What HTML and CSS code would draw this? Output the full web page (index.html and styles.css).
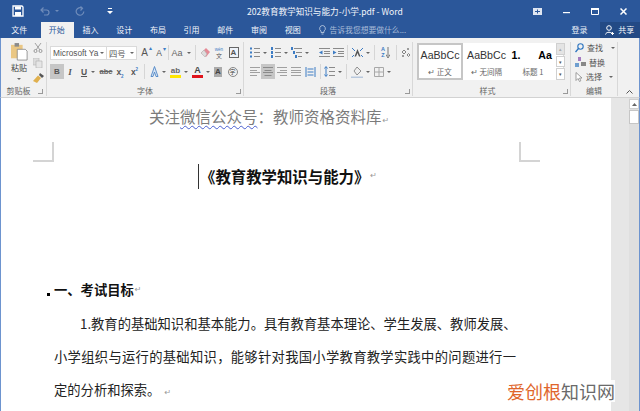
FILE: index.html
```html
<!DOCTYPE html>
<html lang="zh">
<head>
<meta charset="utf-8">
<title>Word</title>
<link rel="stylesheet" href="styles.css">
</head>
<body>
<div class="app">
  <header class="titlebar">
    <div class="qat">
      <svg class="ic q-save" width="12" height="12" viewBox="0 0 12 12"><path d="M1 1h9l1 1v9H1z" fill="none" stroke="#fff" stroke-width="1.3"/><path d="M3 1.500h6v3H3zM3 7h6v4H3z" fill="#fff"/></svg>
      <svg class="ic q-undo" width="10" height="10" viewBox="0 0 10 10"><path d="M1 4h5.500a2.500 2.500 0 0 1 0 5H4M3.500 1.500 1 4l2.500 2.500" fill="none" stroke="#6f8cba" stroke-width="1.200"/></svg>
      <span class="q-caret"></span>
      <svg class="ic q-redo" width="10" height="10" viewBox="0 0 10 10"><path d="M7 2.200A3.800 3.800 0 1 0 8.800 5.500M5.500 .5 7.500 2.300 5.500 4.500" fill="none" stroke="#6f8cba" stroke-width="1.200"/></svg>
      <svg class="ic q-more" width="6" height="6" viewBox="0 0 6 6"><path d="M1 0h4v1H1zM0 3h6L3 6z" fill="#fff"/></svg>
    </div>
    <div class="doc-title">202教育教学知识与能力-小学.pdf - Word</div>
    <div class="winbtns">
      <svg width="9" height="7" viewBox="0 0 9 7"><path d="M0 0h9v7H0z" fill="#dfe6f1"/><path d="M2 3.500h5M4.500 1.500v4" stroke="#2b579a" stroke-width="1"/></svg>
      <svg width="7" height="7" viewBox="0 0 7 7"><path d="M0 4h7v1.200H0z" fill="#fff"/></svg>
      <svg width="8" height="7" viewBox="0 0 8 7"><path d="M.5 .5h7v6h-7z" fill="none" stroke="#fff"/><path d="M0 0h8v2H0z" fill="#fff"/></svg>
      <svg width="7" height="7" viewBox="0 0 7 7"><path d="M.5 .5l6 6M6.500 .5l-6 6" stroke="#fff" stroke-width="1.500"/></svg>
    </div>
  </header>

  <nav class="tabs">
    <span class="tab">文件</span>
    <span class="tab tab-on">开始</span>
    <span class="tab">插入</span>
    <span class="tab">设计</span>
    <span class="tab">布局</span>
    <span class="tab">引用</span>
    <span class="tab">邮件</span>
    <span class="tab">审阅</span>
    <span class="tab">视图</span>
    <span class="tell">
      <svg width="7" height="10" viewBox="0 0 7 10"><path d="M3.500 .5a3 3 0 0 1 1.500 5.500V7.500H2V6A3 3 0 0 1 3.500 .5zM2.500 9h2" fill="none" stroke="#c6d3e6" stroke-width=".8"/></svg>
      告诉我您想要做什么...
    </span>
    <span class="login">登录</span>
    <span class="share">
      <svg width="10" height="10" viewBox="0 0 10 10"><circle cx="4" cy="3" r="2.300" fill="none" stroke="#fff"/><path d="M.5 9.500C1 6.500 7 6.500 7.500 9.500M7.500 7v3M6 8.500h3" fill="none" stroke="#fff"/></svg>
      共享
    </span>
  </nav>

  <section class="ribbon">
    <div class="group g-clip">
      <div class="clip-body">
        <div class="paste">
          <svg width="17" height="18" viewBox="0 0 19 20"><path d="M0 2h13v15H0z" fill="#eac784"/><path d="M4 0h5v4H4z" fill="#8a8a8a"/><path d="M7 7h9l2 2v10H7z" fill="#fff" stroke="#777" stroke-width=".8"/></svg>
          <span class="paste-t">粘贴</span>
          <span class="caret"></span>
        </div>
        <div class="clip-small">
          <svg width="10" height="10" viewBox="0 0 10 10"><path d="M2 0l5 7M8 0L3 7" stroke="#9a9a9a" stroke-width=".9"/><circle cx="2.500" cy="8" r="1.500" fill="none" stroke="#9a9a9a"/><circle cx="7.500" cy="8" r="1.500" fill="none" stroke="#9a9a9a"/></svg>
          <svg width="10" height="10" viewBox="0 0 10 10"><path d="M0 0h6v7H0z" fill="#dcdcdc" stroke="#bbb" stroke-width=".7"/><path d="M3 3h6v7H3z" fill="#e6e6e6" stroke="#b5b5b5" stroke-width=".7"/></svg>
          <svg width="11" height="10" viewBox="0 0 11 10"><path d="M7 0l4 3-2 2-3-3z" fill="#555"/><path d="M5 2.500 8 5 4 10 0 8z" fill="#e0b04e"/></svg>
        </div>
      </div>
      <div class="g-label">剪贴板<i class="launch"></i></div>
    </div>

    <div class="group g-font">
      <div class="row font-r1">
        <span class="combo">Microsoft Ya<span class="caret"></span></span>
        <span class="combo combo-2">四号<span class="caret"></span></span>
        <span class="t-a">A<sup>▴</sup></span>
        <span class="t-a t-a2">A<sup>▾</sup></span>
        <i class="vsep"></i>
        <span class="t-aa">Aa<span class="caret"></span></span>
        <i class="vsep"></i>
        <svg width="11" height="11" viewBox="0 0 11 11"><path d="M6 1l4 4-4 5-5-4z" fill="#e58a96"/><path d="M1 6l3-3 3 4-2 3z" fill="#ddd" stroke="#aaa" stroke-width=".5"/></svg>
        <span class="wen"><b>wén</b><em>文</em></span>
        <span class="boxa">A</span>
      </div>
      <div class="row font-r2">
        <span class="t-b on">B</span>
        <span class="t-i">I</span>
        <span class="t-u"><u>U</u><span class="caret"></span></span>
        <span class="t-abc">abc</span>
        <span class="t-x">x<sub>2</sub></span>
        <span class="t-x">x<sup>2</sup></span>
        <i class="vsep"></i>
        <span class="t-eff"><svg width="9" height="11" viewBox="0 0 9 11"><path d="M4.500 .5 8 10.500H6L4.500 6 3 10.500H1z" fill="#d9e6f5" stroke="#4f86c6" stroke-width=".9"/></svg><span class="caret"></span></span>
        <span class="t-col"><span class="glyph-wrap"><span class="ab">ab</span><i class="bar bar-y"></i></span><span class="caret"></span></span>
        <span class="t-col"><span class="glyph-wrap"><span class="ab ab-a">A</span><i class="bar bar-r"></i></span><span class="caret"></span></span>
        <span class="graya">A</span>
        <span class="circ">字</span>
      </div>
      <div class="g-label">字体<i class="launch"></i></div>
    </div>

    <div class="group g-para">
      <div class="row para-r1">
        <span class="lst"><svg width="10" height="11" viewBox="0 0 10 11"><path d="M4 1.500h6M4 5.500h6M4 9.500h6" stroke="#8a8a8a"/><path d="M0 .5h2v2H0zM0 4.500h2v2H0zM0 8.500h2v2H0z" fill="#3d7cc4"/></svg><span class="caret"></span></span>
        <span class="lst"><svg width="10" height="11" viewBox="0 0 10 11"><path d="M4 1.500h6M4 5.500h6M4 9.500h6" stroke="#8a8a8a"/><path d="M0 0h2v3H0zM0 4h2v3H0zM0 8h2v3H0z" fill="#3d7cc4"/></svg><span class="caret"></span></span>
        <span class="lst"><svg width="11" height="11" viewBox="0 0 11 11"><path d="M3 1.500h8M5 5.500h6M7 9.500h4" stroke="#8a8a8a"/><path d="M0 0h2v3H0zM2 4h2v3H2zM4 8h2v3H4z" fill="#3d7cc4"/></svg><span class="caret"></span></span>
        <span></span>
        <svg width="11" height="9" viewBox="0 0 11 9"><path d="M0 .5h11M5 3.500h6M5 5.500h6M0 8.500h11" stroke="#8a8a8a"/><path d="M3.500 2.500v4L0 4.500z" fill="#3d7cc4"/></svg>
        <svg width="11" height="9" viewBox="0 0 11 9"><path d="M0 .5h11M5 3.500h6M5 5.500h6M0 8.500h11" stroke="#8a8a8a"/><path d="M0 2.500v4l3.500-2z" fill="#3d7cc4"/></svg>
        <i class="vsep"></i>
        <span class="lst"><svg width="11" height="9" viewBox="0 0 11 9"><path d="M5.500 1 8.500 8.500h-1.500L5.500 5 4 8.500H2.500z" fill="#555"/><path d="M0 0l3 3M11 0 8 3M0 9l2-2M11 9 9 7" stroke="#3d7cc4"/></svg><span class="caret"></span></span>
        <i class="vsep"></i>
        <span class="az"><span class="az-t">A<br>Z</span><svg width="4" height="11" viewBox="0 0 4 11"><path d="M2 0v9M0 7.500 2 11l2-3.500" fill="none" stroke="#777"/></svg></span>
        <i class="vsep"></i>
        <svg width="9" height="10" viewBox="0 0 9 10"><path d="M1 4l2-2 2 2-2 2zM6 7l1.500-1.500L9 7 7.500 8.500zM6 1l2 0M7 0v2M1 8h2M2 7v2" fill="none" stroke="#777" stroke-width=".9"/></svg>
      </div>
      <div class="row para-r2">
        <svg width="10" height="9" viewBox="0 0 10 9"><path d="M0 .5h10M0 3.500h7M0 5.500h10M0 8.500h7" stroke="#a0a0a0"/></svg>
        <span class="al on"><svg width="10" height="9" viewBox="0 0 10 9"><path d="M0 .5h10M1.500 3.500h7M0 5.500h10M1.500 8.500h7" stroke="#8a8a8a"/></svg></span>
        <svg width="10" height="9" viewBox="0 0 10 9"><path d="M0 .5h10M3 3.500h7M0 5.500h10M3 8.500h7" stroke="#a0a0a0"/></svg>
        <svg width="10" height="9" viewBox="0 0 10 9"><path d="M0 .5h10M0 3.500h10M0 5.500h10M0 8.500h10" stroke="#a0a0a0"/></svg>
        <svg width="11" height="10" viewBox="0 0 11 10"><path d="M1 0v10M10 0v10M2.500 2h6M2.500 5h6M2.500 8h6" stroke="#3d7cc4"/></svg>
        <i class="vsep"></i>
        <span class="lst"><svg width="11" height="11" viewBox="0 0 11 11"><path d="M5 1.500h6M5 5.500h6M5 9.500h6" stroke="#8a8a8a"/><path d="M2 1v9M.5 2.500 2 .5l1.500 2M.5 8.500 2 10.500l1.500-2" fill="none" stroke="#3d7cc4"/></svg><span class="caret"></span></span>
        <i class="vsep"></i>
        <span class="lst"><svg width="12" height="12" viewBox="0 0 12 12"><path d="M3 5l3-4 4 4-4 4z" fill="#eee" stroke="#777" stroke-width=".8"/><path d="M0 10.500h12v1.500H0z" fill="#b9c8dc"/></svg><span class="caret"></span></span>
        <span class="lst"><svg width="10" height="10" viewBox="0 0 10 10"><path d="M.5 .5h9v9h-9zM5 .5v9M.5 5h9" fill="none" stroke="#a8a8a8"/></svg><span class="caret"></span></span>
      </div>
      <div class="g-label">段落<i class="launch"></i></div>
    </div>

    <div class="group g-style">
      <div class="gallery">
        <div class="st st-on"><span class="st-s">AaBbCc</span><span class="st-n">↵ 正文</span></div>
        <div class="st"><span class="st-s">AaBbCc</span><span class="st-n">↵ 无间隔</span></div>
        <div class="st st-3"><span class="st-s st-h"><b>1.</b><b>Aa</b></span><span class="st-n">标题 1</span></div>
        <div class="gal-btns">
          <span class="gb gb-off">▴</span>
          <span class="gb">▾</span>
          <span class="gb">▾</span>
        </div>
      </div>
      <div class="g-label g-label-style">样式<i class="launch"></i></div>
    </div>

    <div class="group g-edit">
      <div class="edit-list">
        <span class="ed"><svg width="9" height="10" viewBox="0 0 9 10"><circle cx="5.500" cy="3.500" r="2.700" fill="none" stroke="#2e75c0" stroke-width="1.100"/><path d="M3.500 5.500 .5 9" stroke="#2e75c0" stroke-width="1.300"/></svg>查找<span class="caret ed-c"></span></span>
        <span class="ed"><svg width="11" height="10" viewBox="0 0 11 10"><path d="M3 0h3v4H3z" fill="#a57bc0"/><path d="M0 6h4v4H0z" fill="#6f9fd0"/><path d="M6 5h5v4H6z" fill="#888"/></svg>替换</span>
        <span class="ed"><svg width="8" height="10" viewBox="0 0 8 10"><path d="M1 .5v8l2-2 1.500 3 1.300-.7L4.500 6H7z" fill="#fff" stroke="#888" stroke-width=".8"/></svg>选择<span class="caret"></span></span>
      </div>
      <div class="g-label">编辑</div>
    </div>
    <div class="collapse"><svg width="7" height="4" viewBox="0 0 7 4"><path d="M.5 3.500l3-3 3 3" fill="none" stroke="#555"/></svg></div>
  </section>

  <main class="workspace">
    <article class="page">
      <p class="h-notice">关注<span class="wavy">微信公众号</span>&#xFF1A;教师资格资料库<span class="ret">↵</span></p>
      <div class="crops"><i class="crop crop-l"></i><i class="crop crop-r"></i></div>
      <h1 class="doc-h"><span class="cursor"></span>《教育教学知识与能力》<span class="ret">↵</span></h1>
      <h2 class="sec"><i class="sec-dot"></i>一、考试目标<span class="ret">↵</span></h2>
      <p class="body">
        <span class="indent">1.教育的基础知识和基本能力。具有教育基本理论、学生发展、教师发展、</span><br>
        <span class="just">小学组织与运行的基础知识&#xFF0C;能够针对我国小学教育教学实践中的问题进行一</span><br>
        定的分析和探索。<span class="ret ret-b">↵</span>
      </p>
    </article>
    <div class="gutter"></div>
    <div class="scrollbar">
      <span class="sb-btn"><svg width="5" height="3" viewBox="0 0 5 3"><path d="M2.500 0 5 3H0z" fill="#666"/></svg></span>
      <span class="sb-thumb"></span>
    </div>
  </main>
  <div class="watermark"><span class="wm-o">爱创根</span>知识网</div>
</div>
</body>
</html>
```
FILE: styles.css
```css
* { box-sizing: border-box; }
html, body { margin: 0; padding: 0; }
body {
  width: 640px; height: 411px; overflow: hidden; background: #fff;
  font-family: "Noto Sans CJK SC", "Noto Sans", sans-serif; color: #444;
}
.app { position: relative; width: 640px; height: 411px; display: flex; flex-direction: column; overflow: hidden; }

/* title bar */
.titlebar { height: 22px; flex: none; background: #2b579a; display: flex; align-items: center; color: #fff; }
.qat { width: 247px; flex: none; display: flex; align-items: center; }
.q-save { margin-left: 12px; }
.q-undo { margin-left: 16px; }
.q-caret { margin-left: 5px; width: 0; height: 0; border: 2px solid transparent; border-top: 2px solid #6f8cba; border-bottom: 0; }
.q-redo { margin-left: 16px; }
.q-more { margin-left: 22px; }
.doc-title { flex: none; width: 285px; font-size: 8.6px; line-height: 22px; color: #f2f5fa; white-space: nowrap; }
.winbtns { flex: 1; display: flex; align-items: center; gap: 21px; padding-left: 1px; }

/* tabs */
.tabs { height: 16px; flex: none; background: #2b579a; display: flex; font-size: 8px; line-height: 16px; color: #f3f6fb; }
.tab { flex: none; width: 33.7px; text-align: center; }
.tab:first-child { margin-left: 2.5px; }
.tab-on { background: #f1f1f1; color: #2b579a; margin-left: 5px; margin-right: -3px; width: 33px; padding-right: 2px; }
.tab-on + .tab { margin-left: 2.5px; }
.tell { margin-left: 9px; width: 250px; flex: none; display: flex; align-items: center; gap: 4px; color: #a9bcd8; font-size: 7.8px; }
.login { width: 30px; flex: none; margin-left: 1px; text-align: left; padding-left: 2px; }
.share { flex: 1; background: #234a85; display: flex; align-items: center; justify-content: center; gap: 3px; }
.tabs .login { color: #e8eef7; }

/* ribbon */
.ribbon { height: 60px; flex: none; background: #f1f1f1; border-bottom: 1px solid #d2d2d2; display: flex; position: relative; border-left: 1px solid #6d94cf; border-right: 1px solid #6d94cf; }
.group { display: flex; flex-direction: column; border-right: 1px solid #d8d8d8; margin: 4px 0 1px; position: relative; }
.g-clip { width: 46px; }
.g-font { width: 197px; padding: 3px 0 0 3px; }
.g-para { width: 169px; padding: 3px 0 0 4px; }
.g-style { width: 158px; padding: 1px 0 0 4px; }
.g-edit { width: 47px; }
.g-label { position: absolute; left: 0; right: 0; bottom: -1px; height: 13px; line-height: 13px; text-align: center; font-size: 8px; color: #666; }
.launch { position: absolute; right: 3px; bottom: 3px; width: 5px; height: 5px; border-left: 1px solid #999; border-bottom: 1px solid #999; transform: scaleX(-1); }
.g-clip .g-label { padding-right: 10px; }
.g-font .launch, .g-para .launch, .g-style .launch { right: 2px; }
.g-label-style { padding-right: 8px; }
.row { display: grid; align-items: center; justify-items: center; height: 15px; font-family: "Liberation Sans", sans-serif; }
.font-r1 { grid-template-columns: 57px 30px 15px 14px 4px 22px 6px 14px 14px 15px; margin-bottom: 4px; }
.font-r2 { grid-template-columns: 14px 12px 24px 12px 16px 13px 6px 21px 22px 22px 12px 17px; }
.para-r1 { grid-template-columns: 20px 22px 20px 7px 14px 14px 5px 21px 7px 15px 7px 11px; margin-bottom: 4px; }
.para-r2 { grid-template-columns: 13px 14px 14px 14px 14px 6px 20px 6px 22px 22px; }
.vsep { display: block; width: 1px; height: 15px; background: #d6d6d6; }
.caret { display: inline-block; width: 0; height: 0; border-left: 2px solid transparent; border-right: 2px solid transparent; border-top: 2.5px solid #666; vertical-align: middle; margin-left: 4px; }

.clip-body { display: flex; padding: 1px 0 0 8px; }
.paste { width: 20px; display: flex; flex-direction: column; align-items: center; }
.paste-t { font-size: 8px; line-height: 12px; margin-top: 1px; color: #444; white-space: nowrap; }
.paste .caret { margin: 4px 0 0; }
.clip-small { margin-left: 4px; display: flex; flex-direction: column; gap: 5px; padding-top: 0; }

.combo { width: 100%; height: 14px; background: #fff; border: 1px solid #dadada; font-size: 8.3px; line-height: 12px; padding-left: 2px; white-space: nowrap; display: flex; align-items: center; justify-content: space-between; padding-right: 2px; color: #555; }
.combo .caret { margin: 0; }
.combo-2 { font-family: "Noto Sans CJK SC", sans-serif; border-left: 0; }
.t-a { font-size: 10px; color: #555; position: relative; }
.t-a sup { position: absolute; right: -4px; top: -2px; font-size: 6px; color: #3d7cc4; line-height: 1; }
.t-a2 { font-size: 8.5px; }
.t-aa { font-size: 9px; color: #666; white-space: nowrap; }
.wen { display: flex; flex-direction: column; align-items: center; height: 12px; }
.wen b { font-size: 4.5px; line-height: 5px; font-weight: 400; color: #3d7cc4; }
.wen em { font-style: normal; font-size: 6px; line-height: 7px; font-family: "Noto Sans CJK SC", sans-serif; color: #555; }
.boxa { width: 10px; height: 11px; border: 1px solid #666; background: #eef2f8; font-size: 8px; font-weight: 700; line-height: 9px; text-align: center; color: #555; }
.on { background: #c6c6c6; }
.t-b { width: 14px; height: 15px; line-height: 15px; text-align: center; font-size: 8px; font-weight: 700; color: #555; }
.t-i { font-size: 9px; font-style: italic; font-family: "Liberation Serif", serif; font-weight: 700; color: #555; }
.t-u { font-size: 8.5px; font-weight: 700; color: #555; white-space: nowrap; }
.t-abc { font-size: 7.5px; font-weight: 700; color: #666; text-decoration: line-through; }
.t-x { font-size: 8.5px; font-weight: 700; color: #555; line-height: 12px; }
.t-x sub, .t-x sup { font-size: 4.5px; color: #3d7cc4; line-height: 0; }
.t-eff, .t-col, .lst { display: flex; align-items: center; white-space: nowrap; }
.t-eff .caret, .t-col .caret, .lst .caret { margin-left: 3px; }
.glyph-wrap { display: flex; flex-direction: column; align-items: center; width: 11px; }
.ab { font-size: 8px; line-height: 9px; font-weight: 700; color: #666; }
.ab-a { font-size: 9px; color: #444; }
.bar { display: block; width: 11px; height: 3px; }
.bar-y { background: #ffe600; }
.bar-r { background: #e0141c; }
.graya { width: 8px; height: 10px; background: #aaa; color: #444; font-size: 8px; font-weight: 700; line-height: 10px; text-align: center; }
.circ { width: 10px; height: 10px; border: 1px solid #888; border-radius: 50%; font-size: 6px; line-height: 8px; text-align: center; font-family: "Noto Sans CJK SC", sans-serif; }
.al { width: 14px; height: 15px; display: flex; align-items: center; justify-content: center; }
.az { display: flex; align-items: center; gap: 1px; }
.az-t { font-size: 5.5px; line-height: 5.5px; font-weight: 700; color: #3d7cc4; text-align: center; }

.gallery { width: 147px; height: 37px; background: #fff; border: 1px solid #dcdcdc; border-width: 0 1px 0 0; display: flex; position: relative; }
.st { width: 47px; flex: none; display: flex; flex-direction: column; align-items: center; padding-top: 4px; }
.st-on { width: 46px; border: 2px solid #c6c6c6; padding-top: 2px; }
.st-s { font-family: "Liberation Sans", sans-serif; font-size: 10.6px; line-height: 16px; color: #333; white-space: nowrap; }
.st-n { font-size: 7.5px; line-height: 11px; margin-top: 3px; color: #666; white-space: nowrap; }
.st-3 { width: 46px; overflow: hidden; }
.st-h { display: flex; gap: 18px; color: #000; width: 45px; padding-left: 1px; overflow: hidden; }
.gal-btns { position: absolute; left: 139px; top: 0; width: 9px; height: 37px; display: flex; flex-direction: column; gap: 1px; }
.gb { flex: 1; background: #fff; border: 1px solid #d0d0d0; font-size: 5px; line-height: 9px; text-align: center; color: #555; }
.gb-off { background: #e4e4e4; color: #aaa; }

.edit-list { display: flex; flex-direction: column; margin-top: -1px; padding: 0 0 0 4px; gap: 1.5px; }
.ed { height: 13px; display: flex; align-items: center; gap: 3px; font-size: 8px; color: #555; white-space: nowrap; }
.ed-c { margin-left: 5px; }
.collapse { position: absolute; right: 6px; bottom: 3px; line-height: 0; }

/* document */
.workspace { flex: 1; min-height: 0; display: flex; border-left: 1px solid #6d94cf; border-right: 1px solid #6d94cf; }
.page { width: 610px; flex: none; background: #fff; overflow: hidden; }
.page p, .page h1, .page h2 { margin: 0; font-weight: 400; }
.h-notice { padding: 6px 0 0 148px; font-size: 15.5px; line-height: 24px; color: #7b7b7b; white-space: nowrap; }
.wavy { text-decoration: underline wavy #4a5fd0 1px; text-underline-offset: 2px; }
.ret { font-size: 8px; color: #999; margin-left: 1px; font-weight: 400; font-family: "DejaVu Sans", sans-serif; }
.crops { display: flex; justify-content: space-between; padding: 0 71px 0 32px; margin-top: 9px; }
.crop { display: block; width: 21px; height: 20px; }
.crop-l { border-right: 2px solid #d4d4d4; border-bottom: 2px solid #d4d4d4; }
.crop-r { border-left: 2px solid #d4d4d4; border-bottom: 2px solid #d4d4d4; }
.page .doc-h { margin-top: 1px; padding-left: 197px; font-size: 15.4px; font-weight: 700; line-height: 26px; color: #111; display: flex; align-items: center; white-space: nowrap; }
.cursor { width: 1px; height: 25px; background: #333; margin-right: 1px; }
.page .sec { display: flex; align-items: center; padding-left: 46px; margin-top: 91px; font-size: 13.3px; font-weight: 700; line-height: 20px; color: #111; white-space: nowrap; }
.sec-dot { width: 3px; height: 3px; background: #000; margin: 9px 4px 0 0; }
.page .body { margin-top: 7px; padding-left: 53px; font-size: 13.3px; line-height: 33px; color: #222; white-space: nowrap; }
.indent { padding-left: 26px; }
.just { letter-spacing: .3px; }
.ret-b { margin-left: 4px; }
.gutter { width: 18px; flex: none; background: #e6e6e6; }
.scrollbar { flex: 1; background: #dfdfdf; display: flex; flex-direction: column; align-items: center; padding-top: 1px; gap: 1px; }
.sb-btn { width: 10px; height: 10px; background: #fff; border: 1px solid #cfcfcf; display: flex; align-items: center; justify-content: center; }
.sb-thumb { width: 10px; height: 14px; background: #fff; border: 1px solid #c6c6c6; }

.watermark { position: absolute; left: 507px; top: 380px; font-size: 18px; line-height: 22px; color: #6a6a6a; white-space: nowrap; background: rgba(255,255,255,.85); }
.wm-o { color: #e0662c; }
```
